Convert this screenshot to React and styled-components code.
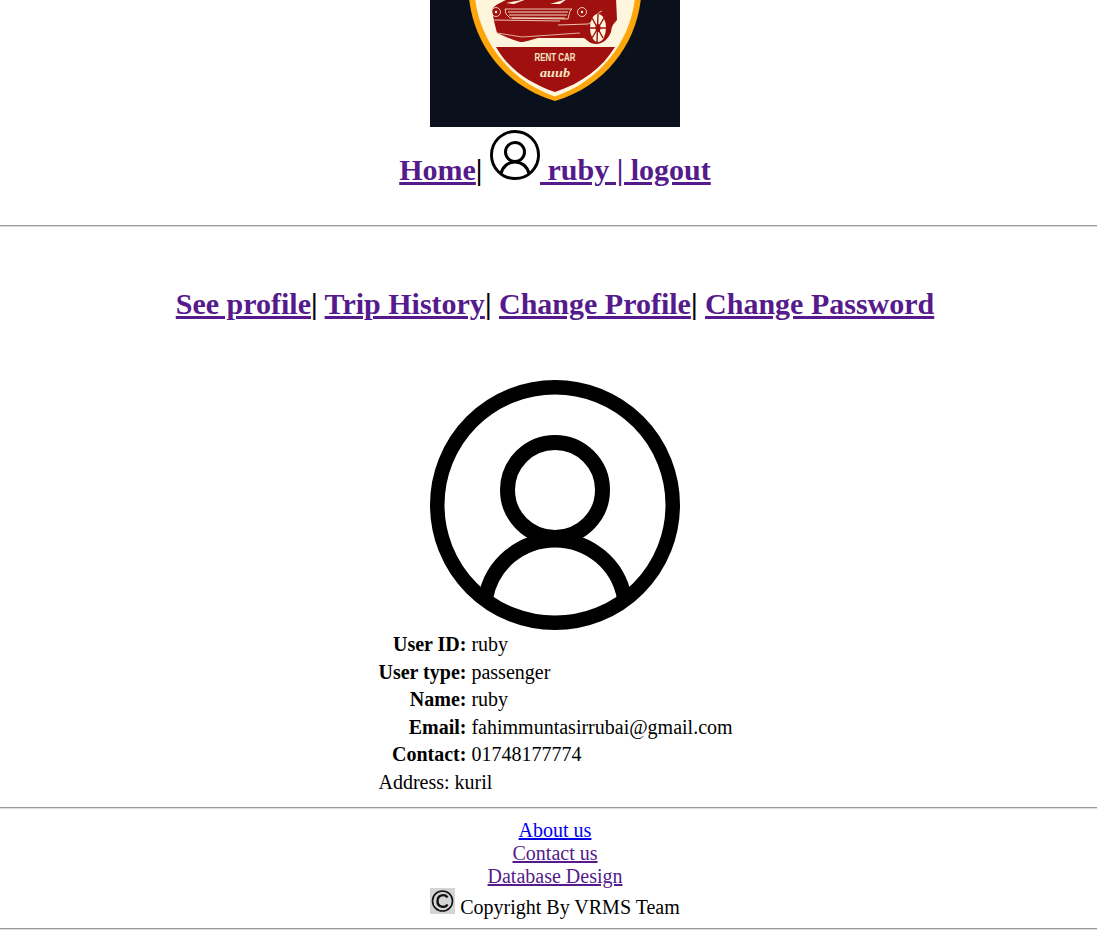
import styled, { createGlobalStyle } from 'styled-components';

const Global = createGlobalStyle`
    html, body {
        margin: 0;
        background: #fff;
        overflow: hidden;
    }
    body {
        font-family: "Liberation Serif", "Times New Roman", serif;
        color: #000;
    }
`

const Page = styled.div`
    width: 1110px;
    height: 930px;
    overflow: hidden;
    text-align: center;
`

const LogoBox = styled.div`
    width: 250px;
    height: 127px;
    margin: 0 auto;
    background: #0b111c;
    overflow: hidden;
    svg { display: block; }
`

const Nav = styled.h1`
    margin: 0;
    padding-top: 3px;
    height: 95px;
    font-size: 30px;
    font-weight: bold;
    line-height: 34px;
    svg { vertical-align: baseline; }
`

const Rule = styled.hr`
    margin: 0;
    border: none;
    height: 1px;
    background: #9a9a9a;
    border-bottom: 1px solid #ddd;
`

const ProfileNav = styled.h1`
    margin: 60px 0 59px;
    font-size: 30px;
    line-height: 34px;
    font-weight: bold;
`

const VisitedLink = styled.a`
    color: #551a8b;
    text-decoration: underline;
`

const FreshLink = styled.a`
    color: #0000ee;
    text-decoration: underline;
`

const BigAvatar = styled.div`
    width: 250px;
    height: 250px;
    margin: 0 auto;
    svg { display: block; }
`

const InfoWrap = styled.div`
    width: 353px;
    margin: 0 auto;
    padding: 1px 0 11px;
    text-align: left;
`

const InfoTable = styled.table`
    border-collapse: separate;
    border-spacing: 0;
    font-size: 20px;
    th, td { padding: 2px 0; line-height: 23.5px; white-space: nowrap; }
    th { text-align: right; padding-right: 5px; font-weight: bold; }
    td { text-align: left; }
`

const Footer = styled.div`
    font-size: 20px;
    padding-top: 10px;
    line-height: 23px;
`

const FooterLink = styled.div`
    height: 23px;
`

const Copy = styled.div`
    height: 39px;
    margin-bottom: 1px;
    svg { vertical-align: baseline; }
`

const Avatar = ({ size }) => (
    <svg width={size} height={size} viewBox="0 0 250 250">
        <circle cx="125" cy="125" r="117.75" fill="none" stroke="#000" strokeWidth="14.5" />
        <circle cx="125" cy="110" r="47.5" fill="none" stroke="#000" strokeWidth="15" />
        <path d="M55.6 218 A70.5 70.5 0 0 1 194.4 218" fill="none" stroke="#000" strokeWidth="15" />
    </svg>
)

const Logo = () => (
    <svg width="250" height="127" viewBox="0 0 250 127">
        <path d="M39 -2 C44 45 75 86 125 101 C175 86 206 45 211 -2 Z" fill="#fca60b" />
        <path d="M45 -2 C50 42 80 81 125 96.5 C170 81 200 42 205 -2 Z" fill="#fdf5dc" />
        <path d="M66 47 L185 47 C172 68 152 83 125 92 C98 83 78 68 66 47 Z" fill="#9f100f" />
        <path d="M62 10 C64 5 70 3 76 0 L186 -2 L187 20 C184 24 182 24 181 32 C178 40 172 44 166 44 C160 44 157 40 154 38 L108 38 C100 40 96 42 90 42 C82 40 74 36 67 33 L64 21 Z" fill="#9f100f" />
        <path d="M76 3 L97 -1 L84 4 Z M120 4 L137 -1 L130 4 Z" fill="#fdf5dc" />
        <path d="M75 9 L142 9 L140 11 L138 19 L80 18 L76 14 Z" fill="none" stroke="#fdf5dc" strokeWidth="0.8" />
        <path d="M78 12 L138 12 M79 15 L137 15 M82 18 L135 18" stroke="#fdf5dc" strokeWidth="0.9" />
        <path d="M64 20 L130 21 M128 25 L158 24 C164 22 164 14 172 11" fill="none" stroke="#fdf5dc" strokeWidth="0.8" />
        <path d="M67 33 L92 37 L150 33" fill="none" stroke="#fdf5dc" strokeWidth="0.7" />
        <circle cx="66" cy="12" r="4.5" fill="none" stroke="#fdf5dc" strokeWidth="0.8" />
        <circle cx="66" cy="12" r="1.2" fill="#fdf5dc" />
        <circle cx="152" cy="12" r="4.5" fill="none" stroke="#fdf5dc" strokeWidth="0.8" />
        <circle cx="152" cy="12" r="1.2" fill="#fdf5dc" />
        <ellipse cx="168" cy="28" rx="8" ry="14" fill="#fdf5dc" />
        <path d="M168 14 L167 42 M160 28 L176 28 M162 18 L173 38 M174 18 L162 38" stroke="#9f100f" strokeWidth="1.4" />
        <ellipse cx="168" cy="28" rx="2.5" ry="4" fill="#9f100f" />
        <text x="125" y="61" textAnchor="middle" fontFamily="Liberation Sans, sans-serif" fontWeight="bold" fontSize="10" fill="#f7e6c4" textLength="41" lengthAdjust="spacingAndGlyphs">RENT CAR</text>
        <text x="125" y="77" textAnchor="middle" fontFamily="Liberation Serif, serif" fontStyle="italic" fontWeight="bold" fontSize="13" fill="#f7e6c4" textLength="30" lengthAdjust="spacingAndGlyphs">auub</text>
    </svg>
)

const CopyIcon = () => (
    <svg width="25" height="26" viewBox="0 0 25 26">
        <rect width="25" height="26" fill="#d4d4d4" />
        <circle cx="12.5" cy="13" r="10" fill="none" stroke="#111" strokeWidth="1.6" />
        <path d="M17.5 9.5 C15.5 6 7.5 6 7.5 13 C7.5 20 15.5 20 17.5 16.5" fill="none" stroke="#111" strokeWidth="2.4" />
    </svg>
)

const rows = [
    ['User ID:', 'ruby'],
    ['User type:', 'passenger'],
    ['Name:', 'ruby'],
    ['Email:', 'fahimmuntasirrubai@gmail.com'],
    ['Contact:', '01748177774'],
]

const App = () => {
    return (
        <Page>
            <Global />
            <LogoBox><Logo /></LogoBox>
            <Nav>
                <VisitedLink href="#">Home</VisitedLink>| <VisitedLink href="#"><Avatar size={50} /> ruby | logout</VisitedLink>
            </Nav>
            <Rule />
            <ProfileNav>
                <VisitedLink href="#">See profile</VisitedLink>| <VisitedLink href="#">Trip History</VisitedLink>| <VisitedLink href="#">Change Profile</VisitedLink>| <VisitedLink href="#">Change Password</VisitedLink>
            </ProfileNav>
            <BigAvatar><Avatar size={250} /></BigAvatar>
            <InfoWrap>
                <InfoTable>
                    <tbody>
                        {rows.map(([label, value]) => (
                            <tr key={label}>
                                <th>{label}</th>
                                <td>{value}</td>
                            </tr>
                        ))}
                        <tr>
                            <td colSpan="2">Address: kuril</td>
                        </tr>
                    </tbody>
                </InfoTable>
            </InfoWrap>
            <Rule />
            <Footer>
                <FooterLink><FreshLink href="#">About us</FreshLink></FooterLink>
                <FooterLink><VisitedLink href="#">Contact us</VisitedLink></FooterLink>
                <FooterLink><VisitedLink href="#">Database Design</VisitedLink></FooterLink>
                <Copy><CopyIcon /> Copyright By VRMS Team</Copy>
            </Footer>
            <Rule />
        </Page>
    );
}

export default App;
